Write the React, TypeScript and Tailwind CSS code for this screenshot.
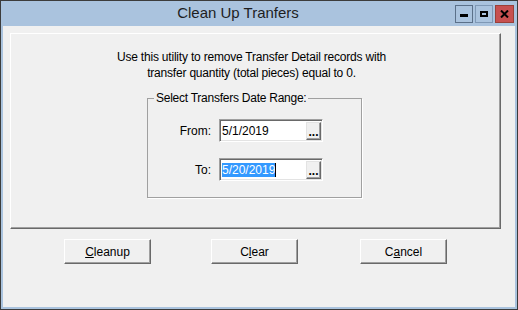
import React from "react";

const font = { fontFamily: '"Liberation Sans", Arial, sans-serif' };

const DateBox = ({ value, selected }: { value: string; selected?: boolean }) => (
  <div className="relative flex h-[23px] w-[104px] items-center border border-t-[#a0a0a0] border-l-[#a0a0a0] border-b-white border-r-white bg-white shadow-[inset_1px_1px_0_#696969,inset_-1px_-1px_0_#e3e3e3]">
    <div className="flex flex-1 items-center pl-[2px] text-[12px] leading-[14px] text-black">
      {selected ? (
        <>
          <span className="bg-[#3399ff] text-white">{value}</span>
          <span className="h-[14px] w-px bg-black" />
        </>
      ) : (
        <span>{value}</span>
      )}
    </div>
    <div className="mr-[1px] flex h-[18px] w-[15px] items-end justify-center border border-t-[#e3e3e3] border-l-[#e3e3e3] border-b-[#696969] border-r-[#696969] bg-[#f0f0f0] pb-[2px] text-[12px] font-bold leading-[10px] text-black shadow-[inset_-1px_-1px_0_#a0a0a0]">
      ...
    </div>
  </div>
);

const Btn = ({ children, className = "" }: { children: React.ReactNode; className?: string }) => (
  <button className={`h-[25px] w-[87px] border border-t-white border-l-white border-b-[#696969] border-r-[#696969] bg-[#f0f0f0] text-[12px] text-black shadow-[inset_-1px_-1px_0_#a0a0a0] ${className}`}>
    {children}
  </button>
);

export default function App() {
  return (
    <div className="flex h-[310px] w-[518px] flex-col border border-[#3c3c3c] bg-[#aac3de]" style={font}>
      {/* title bar */}
      <div className="flex h-[25px] items-start">
        <div className="flex h-full flex-1 items-center justify-center pl-[20px] text-[15px] text-[#1e1e1e]">
          Clean Up Tranfers
        </div>
        <div className="mt-[4px] mr-[3px] flex gap-[2px]">
          <div className="flex h-[18px] w-[18px] items-end justify-center border border-[#5b7089] pb-[5px]">
            <div className="h-[3px] w-[8px] bg-black" />
          </div>
          <div className="flex h-[18px] w-[18px] items-center justify-center border border-[#7f98b5]">
            <div className="h-[6px] w-[8px] border-2 border-black" />
          </div>
          <div className="flex h-[18px] w-[19px] items-center justify-center border border-[#9a4038] bg-[#c75050]">
            <svg width="9" height="8" viewBox="0 0 9 8">
              <path d="M1 0.5 L8 7.5 M8 0.5 L1 7.5" stroke="black" strokeWidth="2" />
            </svg>
          </div>
        </div>
      </div>

      {/* client area */}
      <div className="mx-[2px] mb-[2px] flex flex-1 flex-col bg-[#f0f0f0]">
        <div className="ml-[7px] mt-[7px] flex h-[196px] w-[491px] flex-col border border-t-white border-l-white border-b-[#696969] border-r-[#696969] shadow-[inset_-1px_-1px_0_#a0a0a0] pt-[15px]">
          <div className="pr-[8px] text-center text-[12px] leading-[16px] tracking-[-0.2px] text-black">
            <div>Use this utility to remove Transfer Detail records with</div>
            <div>transfer quantity (total pieces) equal to 0.</div>
          </div>

          <fieldset className="ml-[136px] mt-[10px] w-[215px] border border-[#a0a0a0] pb-[16px] pt-[13px] shadow-[1px_1px_0_white]">
            <legend className="ml-[6px] px-[2px] text-[12px] leading-[15px] tracking-[-0.25px] text-black">
              Select Transfers Date Range:
            </legend>
            <div className="grid grid-cols-[63px_auto] items-center gap-x-[8px] gap-y-[16px] text-[12px] text-black">
              <div className="text-right">From:</div>
              <DateBox value="5/1/2019" />
              <div className="text-right">To:</div>
              <DateBox value="5/20/2019" selected />
            </div>
          </fieldset>
        </div>

        <div className="mt-[10px] flex">
          <Btn className="ml-[61px]">
            <span className="underline">C</span>leanup
          </Btn>
          <Btn className="ml-[60px]">
            C<span className="underline">l</span>ear
          </Btn>
          <Btn className="ml-[62px]">
            C<span className="underline">a</span>ncel
          </Btn>
        </div>
      </div>
    </div>
  );
}
